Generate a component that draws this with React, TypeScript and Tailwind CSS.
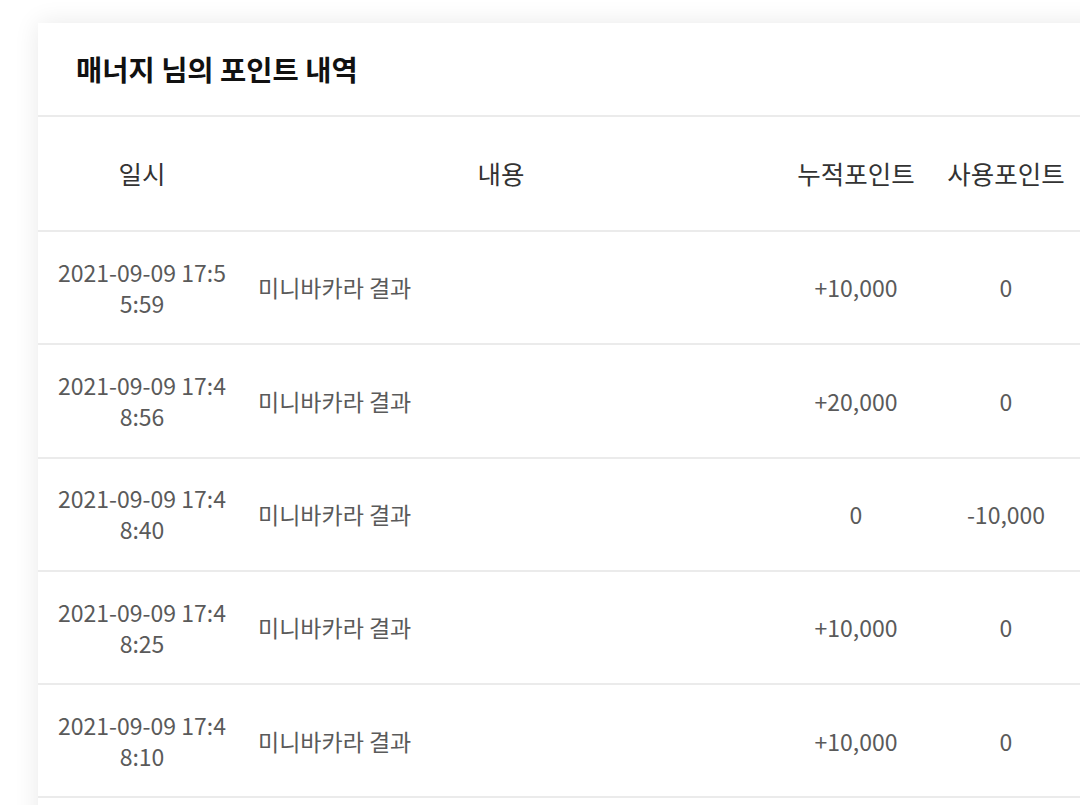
import React from 'react';

type Row = {
  date: string;
  memo: string;
  earned: string;
  used: string;
};

const rows: Row[] = [
  { date: '2021-09-09 17:55:59', memo: '미니바카라 결과', earned: '+10,000', used: '0' },
  { date: '2021-09-09 17:48:56', memo: '미니바카라 결과', earned: '+20,000', used: '0' },
  { date: '2021-09-09 17:48:40', memo: '미니바카라 결과', earned: '0', used: '-10,000' },
  { date: '2021-09-09 17:48:25', memo: '미니바카라 결과', earned: '+10,000', used: '0' },
  { date: '2021-09-09 17:48:10', memo: '미니바카라 결과', earned: '+10,000', used: '0' },
];

const font = { fontFamily: '"Noto Sans CJK KR", "Noto Sans", sans-serif' };

export default function App() {
  return (
    <div className="h-screen w-full overflow-hidden bg-white" style={font}>
      <div className="ml-[38px] mt-[23px] min-h-[900px] w-[1100px] bg-white shadow-[0_0_24px_rgba(0,0,0,0.09)]">
        {/* title */}
        <div className="flex h-[94px] items-center border-b-2 border-[#ebebeb] pl-[38px]">
          <h1 className="text-[28.5px] font-bold text-[#111]">매너지 님의 포인트 내역</h1>
        </div>

        {/* table head */}
        <div className="grid h-[115px] grid-cols-[208px_510px_200px_100px] items-center border-b-2 border-[#ebebeb] text-[25.5px] text-[#333]">
          <div className="text-center">일시</div>
          <div className="text-center">내용</div>
          <div className="text-center">누적포인트</div>
          <div className="flex justify-center whitespace-nowrap">사용포인트</div>
        </div>

        {/* rows */}
        {rows.map((r, i) => (
          <div
            key={i}
            className="grid h-[113.3px] grid-cols-[208px_510px_200px_100px] items-center border-b-2 border-[#ebebeb] text-[23px] text-[#5a5a5a]"
          >
            <div className="flex justify-center">
              <span className="w-[172px] break-all text-center leading-[31px]">{r.date}</span>
            </div>
            <div className="pl-[12px]">{r.memo}</div>
            <div className="text-center">{r.earned}</div>
            <div className="flex justify-center whitespace-nowrap">{r.used}</div>
          </div>
        ))}
      </div>
    </div>
  );
}
